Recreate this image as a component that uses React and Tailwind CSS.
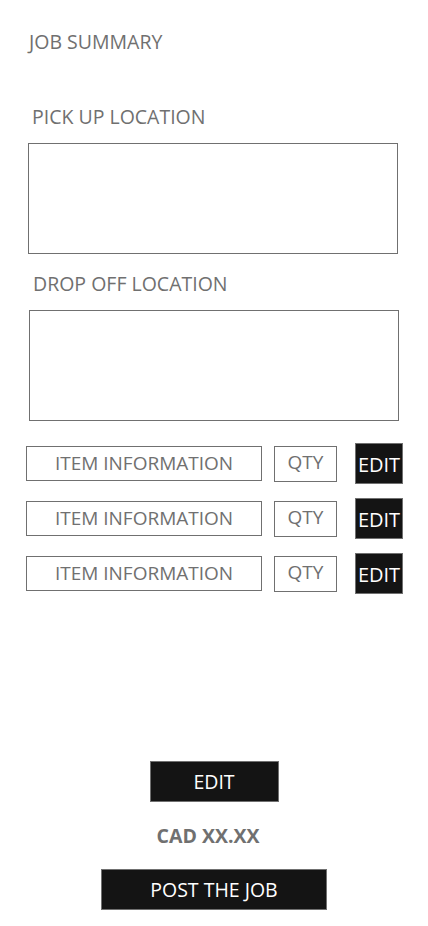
import React from 'react'

const ItemRow = () => {
  return (
    <div className="flex items-center h-[41px]">
      <div className="ml-[26px] w-[236px] h-[35px] border border-[#707070] flex items-center justify-center text-[19px] text-[#707070]">
        ITEM INFORMATION
      </div>
      <div className="ml-[12px] w-[63px] h-[36px] border border-[#707070] flex items-center justify-center text-[19px] text-[#707070] pb-[3px]">
        QTY
      </div>
      <button className="ml-[18px] w-[48px] h-[41px] bg-[#141414] border border-[#707070] flex items-center justify-center text-[20px] text-white pt-[3px]">
        EDIT
      </button>
    </div>
  )
}

const App = () => {
  return (
    <div className="w-[428px] h-[926px] bg-white font-['Open_Sans',sans-serif] relative">
      <div className="pt-[30px] pl-[29px] text-[19.5px] leading-6 text-[#707070]">JOB SUMMARY</div>

      <div className="mt-[51px] pl-[32px] text-[19.5px] leading-6 text-[#707070]">PICK UP LOCATION</div>
      <div className="mt-[14px] ml-[28px] w-[370px] h-[111px] border border-[#707070]"></div>

      <div className="mt-[18px] pl-[33px] text-[19.5px] leading-6 text-[#707070]">DROP OFF LOCATION</div>
      <div className="mt-[14px] ml-[29px] w-[370px] h-[111px] border border-[#707070]"></div>

      <div className="mt-[22px] flex flex-col gap-[14px]">
        <ItemRow />
        <ItemRow />
        <ItemRow />
      </div>

      <div className="mt-[167px] flex flex-col items-center">
        <button className="w-[129px] h-[41px] bg-[#141414] border border-[#707070] text-white text-[19.5px]">
          EDIT
        </button>
        <div className="mt-[22px] -ml-[12px] text-[19.5px] leading-6 font-bold text-[#707070]">CAD XX.XX</div>
        <button className="mt-[21px] w-[226px] h-[41px] bg-[#141414] border border-[#707070] text-white text-[19.5px]">
          POST THE JOB
        </button>
      </div>
    </div>
  )
}

export default App
